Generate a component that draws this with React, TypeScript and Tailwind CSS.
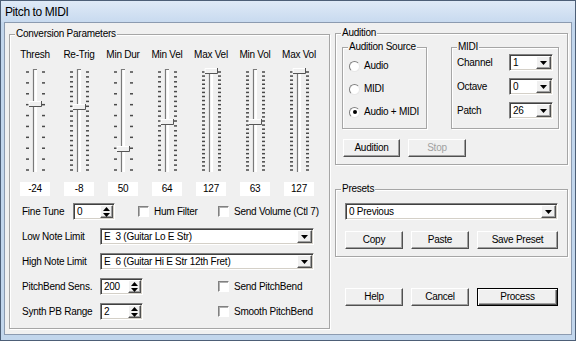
import React from "react";

const sunken =
  "bg-white border border-t-[#808080] border-l-[#808080] border-r-white border-b-white shadow-[inset_1px_1px_0_#404040,inset_-1px_-1px_0_#d4d0c8]";
const raised =
  "bg-[#f0f0f0] border border-t-white border-l-white border-r-[#505050] border-b-[#505050] shadow-[inset_-1px_-1px_0_#a0a0a0]";

function GroupBox({
  label,
  className,
  children,
}: {
  label: string;
  className: string;
  children: React.ReactNode;
}) {
  return (
    <div
      className={`relative border border-[#a6a6a6] shadow-[inset_1px_1px_0_#ffffff,1px_1px_0_#ffffff] ${className}`}
    >
      <span className="absolute left-[5px] top-[-7px] bg-[#f0f0f0] px-px leading-[12px]">
        {label}
      </span>
      {children}
    </div>
  );
}

function DownArrow() {
  return (
    <svg width="7" height="4" viewBox="0 0 7 4">
      <path d="M0 0H7L3.5 4Z" fill="#000" />
    </svg>
  );
}

function Combo({ value, className }: { value: string; className: string }) {
  return (
    <div className={`flex h-[17px] ${sunken} ${className}`}>
      <div className="flex-1 pl-[3px] leading-[15px] whitespace-pre">{value}</div>
      <div className={`w-[15px] flex items-center justify-center m-px ${raised}`}>
        <DownArrow />
      </div>
    </div>
  );
}

function Spin({ value, className }: { value: string; className: string }) {
  return (
    <div className={`flex h-[17px] ${sunken} ${className}`}>
      <div className="flex-1 pl-[3px] leading-[15px]">{value}</div>
      <div className={`w-[13px] m-px flex flex-col items-center justify-center gap-[2px] ${raised}`}>
        <svg width="7" height="4" viewBox="0 0 7 4">
          <path d="M0 4H7L3.5 0Z" fill="#000" />
        </svg>
        <svg width="7" height="4" viewBox="0 0 7 4">
          <path d="M0 0H7L3.5 4Z" fill="#000" />
        </svg>
      </div>
    </div>
  );
}

function Check({ label, className }: { label: string; className: string }) {
  return (
    <div className={`flex items-center ${className}`}>
      <div className="w-[11px] h-[11px] bg-white border border-t-[#808080] border-l-[#808080] border-r-white border-b-white shadow-[inset_1px_1px_0_#b0b0b0]" />
      <span className="ml-[5px] leading-[12px]">{label}</span>
    </div>
  );
}

function Radio({ label, checked }: { label: string; checked?: boolean }) {
  return (
    <div className="flex items-center h-[12px]">
      <div className="w-[11px] h-[11px] rounded-full bg-white border border-t-[#808080] border-l-[#808080] border-r-[#e8e8e8] border-b-[#e8e8e8] flex items-center justify-center">
        {checked && <div className="w-[4px] h-[4px] rounded-full bg-black" />}
      </div>
      <span className="ml-[4px] leading-[12px]">{label}</span>
    </div>
  );
}

function Button({
  label,
  className,
  disabled,
  primary,
}: {
  label: string;
  className: string;
  disabled?: boolean;
  primary?: boolean;
}) {
  const frame = primary
    ? "bg-[#f0f0f0] border border-black shadow-[inset_1px_1px_0_#ffffff,inset_-1px_-1px_0_#505050,inset_-2px_-2px_0_#a0a0a0]"
    : raised;
  return (
    <div
      className={`h-[18px] flex items-center justify-center leading-[12px] ${frame} ${
        disabled ? "text-[#a0a0a0]" : ""
      } ${className}`}
    >
      {label}
    </div>
  );
}

function Slider({ ticks, thumb }: { ticks: number; thumb: number }) {
  const c = 22;
  const ys = Array.from({ length: ticks }, (_, i) => 5 + (98 * i) / (ticks - 1));
  return (
    <svg width="44" height="107" viewBox="0 0 44 107">
      {ys.map((y, i) => (
        <g key={i} fill="#4a4a4a">
          <rect x={c - 9} y={y - 0.75} width="3" height="1.5" />
          <rect x={c + 7} y={y - 0.75} width="3" height="1.5" />
        </g>
      ))}
      <rect x={c - 2} y="2" width="4" height="103" fill="#ffffff" />
      <path d={`M${c - 1.5} 105V2.5H${c + 2}`} stroke="#7a7a7a" strokeWidth="1.2" fill="none" />
      <rect x={c - 6} y={thumb - 3} width="13" height="6" fill="#f0f0f0" />
      <path d={`M${c - 6} ${thumb + 2.5}V${thumb - 2.5}H${c + 6.5}`} stroke="#ffffff" fill="none" />
      <path d={`M${c - 6} ${thumb + 2.5}H${c + 6.5}V${thumb - 3}`} stroke="#555" fill="none" />
    </svg>
  );
}

const columns = [
  { name: "Thresh", value: "-24", ticks: 10, thumb: 37 },
  { name: "Re-Trig", value: "-8", ticks: 21, thumb: 40 },
  { name: "Min Dur", value: "50", ticks: 10, thumb: 82 },
  { name: "Min Vel", value: "64", ticks: 21, thumb: 55 },
  { name: "Max Vel", value: "127", ticks: 25, thumb: 4 },
  { name: "Min Vol", value: "63", ticks: 25, thumb: 55 },
  { name: "Max Vol", value: "127", ticks: 25, thumb: 4 },
];

export default function App() {
  return (
    <div className="w-[576px] h-[341px] font-['Liberation_Sans',Arial,sans-serif] text-[10px] tracking-[-0.25px] text-black bg-[#c2d6ec] border border-[#4d5f77] flex flex-col">
      <div className="h-[21px] bg-gradient-to-b from-[#dfeaf7] to-[#c8daef] flex items-center pl-[4px] text-[12px] tracking-[-0.4px]">
        Pitch to MIDI
      </div>
      <div className="flex-1 px-[3px] pb-[5px]">
        <div className="h-full border border-[#8c9bb0] bg-[#f0f0f0] flex items-start">
          {/* Conversion Parameters */}
          <GroupBox label="Conversion Parameters" className="ml-[4px] mt-[11px] w-[321px] h-[295px]">
            <div className="flex ml-[3px] mt-[14px] h-[12px]">
              {columns.map((c) => (
                <div key={c.name} className="w-[44px] text-center leading-[12px]">
                  {c.name}
                </div>
              ))}
            </div>
            <div className="flex ml-[3px] mt-[6px]">
              {columns.map((c) => (
                <Slider key={c.name} ticks={c.ticks} thumb={c.thumb} />
              ))}
            </div>
            <div className="flex ml-[3px] mt-[8px]">
              {columns.map((c) => (
                <div key={c.name} className="w-[44px] flex justify-center">
                  <div className="w-[30px] h-[14px] bg-white text-center leading-[14px]">{c.value}</div>
                </div>
              ))}
            </div>
            <div className="flex flex-col gap-[8px] mt-[7px] pl-[12px]">
              <div className="flex items-center h-[17px]">
                <span className="w-[51px]">Fine Tune</span>
                <Spin value="0" className="w-[42px]" />
                <Check label="Hum Filter" className="ml-[23px] w-[80px]" />
                <Check label="Send Volume (Ctl 7)" className="" />
              </div>
              <div className="flex items-center h-[17px]">
                <span className="w-[78px]">Low Note Limit</span>
                <Combo value="E  3 (Guitar Lo E Str)" className="w-[214px]" />
              </div>
              <div className="flex items-center h-[17px]">
                <span className="w-[78px]">High Note Limit</span>
                <Combo value="E  6 (Guitar Hi E Str 12th Fret)" className="w-[214px]" />
              </div>
              <div className="flex items-center h-[17px]">
                <span className="w-[78px]">PitchBend Sens.</span>
                <Spin value="200" className="w-[43px]" />
                <Check label="Send PitchBend" className="ml-[75px]" />
              </div>
              <div className="flex items-center h-[17px]">
                <span className="w-[78px]">Synth PB Range</span>
                <Spin value="2" className="w-[43px]" />
                <Check label="Smooth PitchBend" className="ml-[75px]" />
              </div>
            </div>
          </GroupBox>

          <div className="ml-[5px] w-[233px] flex flex-col">
            {/* Audition */}
            <GroupBox label="Audition" className="mt-[10px] h-[132px]">
              <div className="flex mt-[13px] ml-[6px]">
                <GroupBox label="Audition Source" className="w-[85px] h-[82px]">
                  <div className="flex flex-col gap-[11px] mt-[12px] pl-[6px]">
                    <Radio label="Audio" />
                    <Radio label="MIDI" />
                    <Radio label="Audio + MIDI" checked />
                  </div>
                </GroupBox>
                <GroupBox label="MIDI" className="ml-[24px] w-[108px] h-[82px]">
                  <div className="flex flex-col gap-[7px] mt-[6px] pl-[5px]">
                    <div className="flex items-center">
                      <span className="w-[52px]">Channel</span>
                      <Combo value="1" className="w-[44px]" />
                    </div>
                    <div className="flex items-center">
                      <span className="w-[52px]">Octave</span>
                      <Combo value="0" className="w-[44px]" />
                    </div>
                    <div className="flex items-center">
                      <span className="w-[52px]">Patch</span>
                      <Combo value="26" className="w-[44px]" />
                    </div>
                  </div>
                </GroupBox>
              </div>
              <div className="flex mt-[10px] ml-[7px]">
                <Button label="Audition" className="w-[57px]" />
                <Button label="Stop" className="ml-[8px] w-[58px]" disabled />
              </div>
            </GroupBox>

            {/* Presets */}
            <GroupBox label="Presets" className="mt-[24px] h-[68px]">
              <Combo value="0 Previous" className="mt-[13px] ml-[9px] w-[213px]" />
              <div className="flex mt-[11px] ml-[9px]">
                <Button label="Copy" className="w-[58px]" />
                <Button label="Paste" className="ml-[8px] w-[58px]" />
                <Button label="Save Preset" className="ml-[8px] w-[81px]" />
              </div>
            </GroupBox>

            <div className="flex mt-[31px] ml-[10px]">
              <Button label="Help" className="w-[58px]" />
              <Button label="Cancel" className="ml-[8px] w-[58px]" />
              <Button label="Process" className="ml-[8px] w-[81px]" primary />
            </div>
          </div>
        </div>
      </div>
    </div>
  );
}
